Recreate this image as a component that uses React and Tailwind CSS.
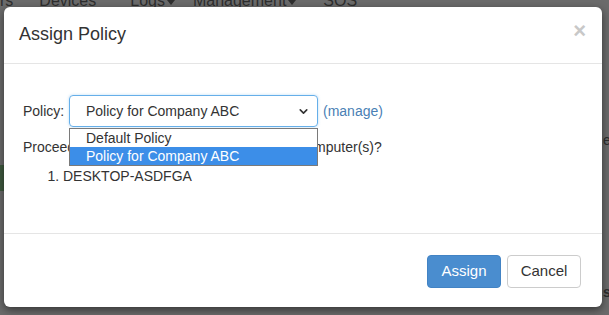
import { ChevronDown } from "lucide-react";

const Caret = () => (
  <span className="inline-block ml-[2px] mb-[4px] w-0 h-0 border-l-[4px] border-r-[4px] border-t-[5px] border-l-transparent border-r-transparent border-t-[#2e2e2e]" />
);

const NavBehind = () => (
  <div className="flex items-end text-[16px] leading-none text-[#2e2e2e] -mt-[6px] h-[15px]">
    <span>rs</span>
    <span className="ml-[26px]">Devices</span>
    <span className="ml-[34px] flex items-end">Logs<Caret /></span>
    <span className="ml-[18px] flex items-end">Management<Caret /></span>
    <span className="ml-[27px]">SOS</span>
  </div>
);

const App = () => {
  return (
    <div
      className="relative w-[609px] h-[315px] overflow-hidden bg-[#6b6b6b]"
      style={{ fontFamily: '"Liberation Sans", Arial, sans-serif' }}
    >
      <NavBehind />
      {/* faint page bits behind the backdrop */}
      <div className="absolute left-0 top-[165px] w-[4px] h-[26px] bg-[#3f5a3f]" />
      <div className="absolute right-0 top-[130px] w-[6px] text-[14px] text-[#2e2e2e]">e</div>
      <div className="absolute right-0 top-[282px] w-[6px] text-[14px] font-bold text-[#2e2e2e]">s</div>

      <div className="absolute left-[4px] top-[7px] w-[598px] h-[300px] bg-white rounded-[6px] shadow-[0_3px_8px_rgba(0,0,0,0.5)] flex flex-col text-[#333] text-[14px]">
        <div className="h-[57px] border-b border-[#e5e5e5] flex items-center justify-between pl-[15px] pr-[16px]">
          <h4 className="text-[18px] leading-none text-[#333] -mt-[3px]">Assign Policy</h4>
          <span className="text-[22px] font-bold leading-none text-[#c8c8c8] -mt-[8px]">×</span>
        </div>

        <div className="flex-1 pl-[19px] pt-[31px]">
          <div className="flex items-center h-[32px]">
            <span className="w-[46px]">Policy:</span>
            <div className="relative">
              <div className="w-[249px] h-[32px] border border-[#66afe9] rounded-[4px] flex items-center justify-between pl-[16px] pr-[7px] shadow-[0_0_3px_rgba(102,175,233,0.45)]">
                <span>Policy for Company ABC</span>
                <ChevronDown size={13} strokeWidth={3} className="text-[#333]" />
              </div>
              <div className="absolute left-0 top-[33px] w-[249px] bg-white border border-[#7a7a7a] z-10">
                <div className="h-[18px] pl-[16px] leading-[18px]">Default Policy</div>
                <div className="h-[18px] pl-[16px] leading-[18px] bg-[#3c8ee8] text-white">Policy for Company ABC</div>
              </div>
            </div>
            <a className="ml-[5px] text-[#4a7fb5]">(manage)</a>
          </div>

          <p className="mt-[10px] leading-[20px]">Proceed to assign the policy to the following computer(s)?</p>
          <ol className="list-decimal pl-[40px] mt-[9px] leading-[20px]">
            <li>DESKTOP-ASDFGA</li>
          </ol>
        </div>

        <div className="h-[74px] border-t border-[#e5e5e5] flex items-center justify-end gap-[6px] pr-[21px] pt-[1px]">
          <button className="w-[74px] h-[33px] rounded-[4px] bg-[#4a8dcf] border border-[#4283c4] text-white text-[15px]">
            Assign
          </button>
          <button className="w-[74px] h-[33px] rounded-[4px] bg-white border border-[#ccc] text-[#333] text-[15px]">
            Cancel
          </button>
        </div>
      </div>
    </div>
  );
};

export default App;
